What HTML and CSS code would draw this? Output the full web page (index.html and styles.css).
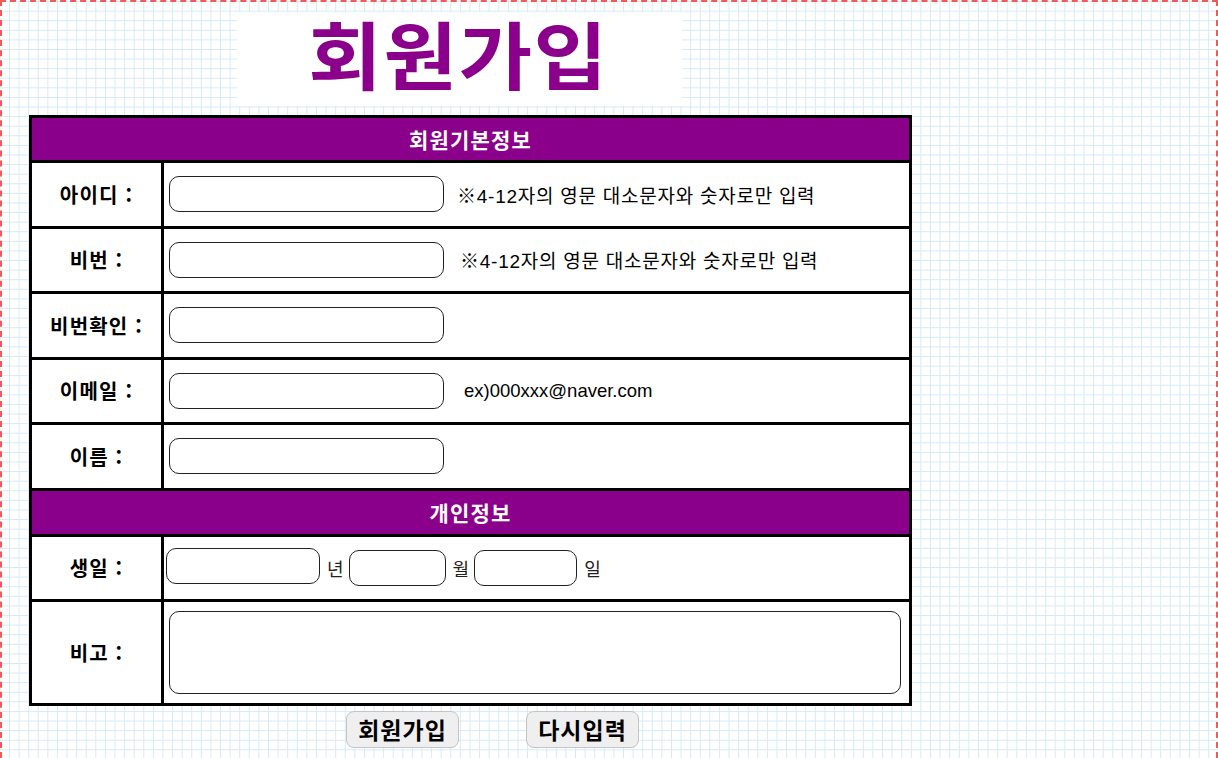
FILE: index.html
```html
<!DOCTYPE html>
<html lang="ko">
<head>
<meta charset="utf-8">
<title>회원가입</title>
<link rel="stylesheet" href="styles.css">
</head>
<body>
<div class="page">
  <div class="title-box"><h1 class="title">회원가입</h1></div>
  <form class="join-form">
    <table class="join-table">
      <tr class="head-row"><th colspan="2">회원기본정보</th></tr>
      <tr class="data-row">
        <td class="label">아이디 :</td>
        <td class="field"><input type="text" class="inp"><span class="hint">※4-12자의 영문 대소문자와 숫자로만 입력</span></td>
      </tr>
      <tr class="data-row">
        <td class="label">비번 :</td>
        <td class="field"><input type="password" class="inp"><span class="hint hint-b">※4-12자의 영문 대소문자와 숫자로만 입력</span></td>
      </tr>
      <tr class="data-row">
        <td class="label">비번확인 :</td>
        <td class="field"><input type="password" class="inp"></td>
      </tr>
      <tr class="data-row">
        <td class="label">이메일 :</td>
        <td class="field"><input type="text" class="inp"><span class="hint hint-mail">ex)000xxx@naver.com</span></td>
      </tr>
      <tr class="data-row">
        <td class="label">이름 :</td>
        <td class="field"><input type="text" class="inp"></td>
      </tr>
      <tr class="head-row head-row-2"><th colspan="2">개인정보</th></tr>
      <tr class="birth-row">
        <td class="label">생일 :</td>
        <td class="field birth"><input type="text" class="inp inp-year"><span class="unit">년</span><input type="text" class="inp inp-month"><span class="unit">월</span><input type="text" class="inp inp-day"><span class="unit">일</span></td>
      </tr>
      <tr class="memo-row">
        <td class="label">비고 :</td>
        <td class="field"><textarea class="memo"></textarea></td>
      </tr>
    </table>
    <div class="buttons">
      <button type="submit" class="btn">회원가입</button>
      <button type="reset" class="btn">다시입력</button>
    </div>
  </form>
</div>
</body>
</html>
```

FILE: styles.css
```css
html, body {
  margin: 0;
  padding: 0;
}
body {
  background-color: #ffffff;
  background-image:
    linear-gradient(to right, #d5eaf7 1px, transparent 1px),
    linear-gradient(to bottom, #d5eaf7 1px, transparent 1px);
  background-size: 9.6px 9.6px;
  background-position: 9px 1px;
  font-family: "Liberation Sans", "Noto Sans CJK KR", sans-serif;
  color: #000;
}
.page {
  box-sizing: border-box;
  width: 1218px;
  min-height: 758px;
  border: 2px dashed #f25a5a;
  border-bottom: none;
  padding-top: 10px;
}
.title-box {
  margin-left: 235px;
  width: 445px;
  height: 94px;
  background: #fff;
  display: flex;
  align-items: flex-start;
  justify-content: center;
}
.title {
  margin: -12px 0 0 0;
  font-family: "Noto Sans CJK KR", sans-serif;
  font-size: 80px;
  font-weight: 700;
  color: #8b008b;
  letter-spacing: 1.5px;
  line-height: 1.3;
  padding-right: 2px;
  transform: scaleY(0.92);
}
.join-form {
  margin-left: 27px;
  margin-top: 9px;
}
.join-table {
  width: 883px;
  border-collapse: collapse;
  border: 3px solid #000;
  background: #fff;
}
.join-table th,
.join-table td {
  border: 3px solid #000;
  padding: 0;
}
.head-row th {
  background: #8b008b;
  color: #fff;
  height: 42px;
  font-family: "Noto Sans CJK KR", sans-serif;
  font-size: 21px;
  letter-spacing: 1.2px;
  font-weight: 700;
  text-align: center;
}
.head-row-2 th {
  height: 43px;
}
.data-row td {
  height: 62.5px;
}
.birth-row td {
  height: 62px;
}
.memo-row td {
  height: 101px;
}
.label {
  width: 129px;
  text-align: center;
  font-family: "Noto Sans CJK KR", sans-serif;
  font-size: 20px;
  letter-spacing: 1.2px;
  font-weight: 700;
}
.field {
  padding-left: 5px !important;
  font-family: "Liberation Sans", "Noto Sans CJK KR", sans-serif;
  font-size: 19px;
}
.inp {
  box-sizing: border-box;
  width: 275px;
  height: 36px;
  border: 1px solid #222;
  border-radius: 10px;
  background: #fff;
  vertical-align: middle;
  margin: 0;
}
.hint {
  margin-left: 13px;
  letter-spacing: 0.75px;
  vertical-align: middle;
}
.hint-b {
  margin-left: 16px;
}
.hint-mail {
  margin-left: 20px;
  font-size: 18.5px;
  letter-spacing: 0;
}
.birth {
  padding-left: 2px !important;
}
.inp-year {
  width: 154px;
  position: relative;
  top: -2px;
}
.inp-month {
  width: 97px;
}
.inp-day {
  width: 103px;
}
.unit {
  display: inline-block;
  margin: 0 5px 0 7px;
  font-family: "Noto Sans CJK KR", sans-serif;
  font-size: 18px;
  color: #222;
  vertical-align: middle;
}
.memo {
  display: block;
  box-sizing: border-box;
  width: 732px;
  height: 83px;
  margin: 0;
  border: 1px solid #222;
  border-radius: 10px;
  resize: none;
  background: #fff;
}
.buttons {
  display: flex;
  gap: 67px;
  margin-left: 317px;
  margin-top: 5px;
}
.btn {
  box-sizing: border-box;
  width: 113px;
  height: 37px;
  background: #efefef;
  border: 1px solid #c4c4c4;
  border-radius: 8px;
  font-family: "Noto Sans CJK KR", sans-serif;
  font-size: 23px;
  letter-spacing: 1px;
  font-weight: 700;
  color: #000;
  padding: 0;
}
```
